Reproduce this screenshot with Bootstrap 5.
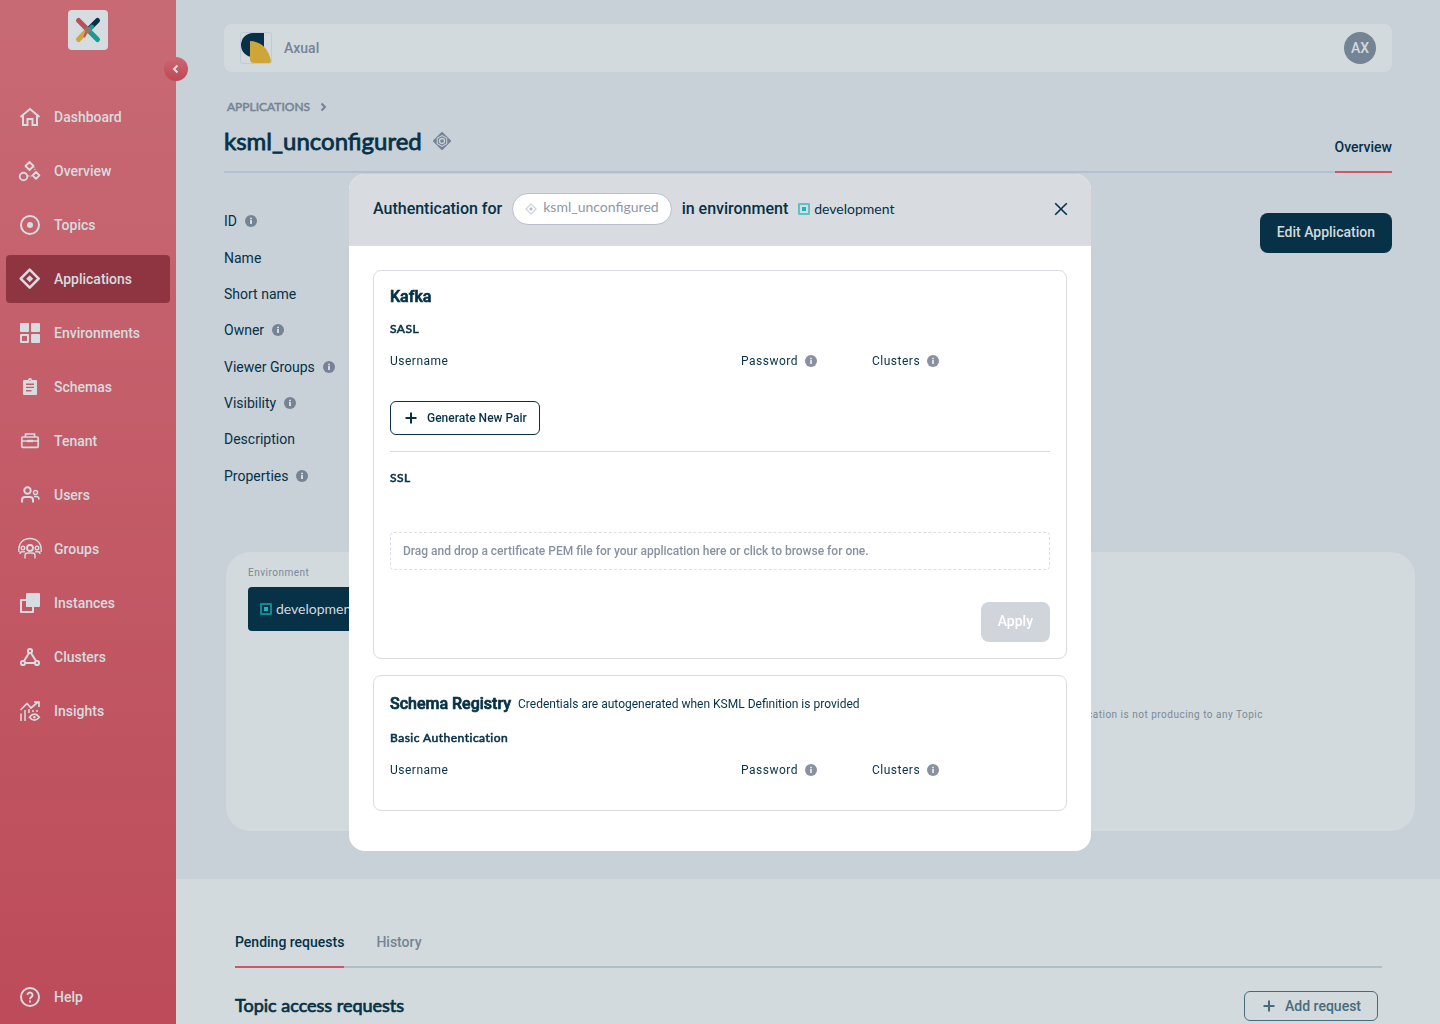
<!DOCTYPE html>
<html lang="en">
<head>
<meta charset="utf-8">
<meta name="viewport" content="width=device-width, initial-scale=1">
<title>ksml_unconfigured - Axual</title>
<link rel="stylesheet" href="https://cdn.jsdelivr.net/npm/bootstrap@5.3.0/dist/css/bootstrap.min.css">
<style>
:root{--navy:#063147;--page:#c8d0d8;--panel:#d2dadd;--muted:#758494;--accent:#cf5567;--line:#d9dbe1}
body{font-family:Roboto,"Liberation Sans",sans-serif;font-size:14px;line-height:20px;color:var(--navy);background:var(--panel);overflow:hidden}
svg{display:block;flex:none}
.lato{font-family:Lato,"Liberation Sans",sans-serif}
.sidebar{width:176px;height:100vh;background:linear-gradient(#c86a74,#bd4b59)}
.sidebar .nav-link{height:48px;padding:0 12px;gap:12px;color:#d6dcdf;font-weight:500;border-radius:4px;margin:0 6px}
.sidebar .nav-link.active{background:#8e3541}
.brand{width:40px;height:40px;margin:10px 68px 43px;border-radius:4px;background:#d5dde0}
.side-items{gap:6px}
.side-items.help{margin-bottom:3px}
.collapse-btn{width:24px;height:24px;top:57px;right:-12px;border:0;border-radius:50%;background:linear-gradient(#cc6873,#be4756);padding:0 6px}
.upper{background:var(--page);padding:24px 48px 48px}
.topbar{height:48px;border-radius:8px;background:var(--panel);padding:0 16px;color:var(--muted);font-weight:500}
.org-name{gap:12px}
.avatar{width:32px;height:32px;border:0;border-radius:50%;background:#758494;color:#d2dadd;font-weight:500;padding:0}
.crumb{gap:6px;margin:25px 3px 0;font-size:12px;-webkit-text-stroke:.5px;color:var(--muted)}
.crumb a{color:inherit;text-decoration:none}
.title-row{height:56px;border-bottom:2px solid #b3bfd2}
.title-row h1{font-size:24px;line-height:32px;font-weight:400;-webkit-text-stroke:.8px;margin:8px 0 0}
.title-row .tab{height:56px;padding-top:20px;border-bottom:2px solid var(--accent);color:var(--navy);text-decoration:none;font-weight:500}
.title-name{gap:11px}
.app-mark{margin-top:15px}
.details{height:291px;margin:30px 0 58px}
.navy-btn{height:40px;margin-top:40px;padding:0 16px 2px;border-radius:8px;background:var(--navy);color:#d2dadd;font-size:14px;font-weight:500;line-height:20px}
.env-panel{height:279px;margin:0 -23px 0 2px;padding:11px 152px 0 22px;border-radius:24px;background:var(--panel);font-size:10px;letter-spacing:.5px;color:#7c8998}
.env-btn{display:flex;align-items:center;gap:4px;width:222px;height:44px;margin-top:4px;padding:0 12px;border:0;border-radius:4px;background:var(--navy);color:#d2dadd;font-size:14px;letter-spacing:normal}
.env-note{padding-top:36px}
.lower{padding:53px 58px 0 59px}
.tabs-line{gap:32px;height:36px;border-bottom:2px solid #b0bdc4}
.tabs-line a{height:36px;text-decoration:none;font-weight:500;color:var(--muted)}
.tabs-line a.current{color:var(--navy);border-bottom:2px solid var(--accent)}
.requests{margin-top:23px;padding-right:4px}
.requests h2{font-size:18px;line-height:28px;font-weight:400;-webkit-text-stroke:.7px;margin:0;padding-bottom:2px}
.add-btn{height:30px;padding:0 16px 0 18px;gap:10px;border:1px solid #486b7c;border-radius:6px;color:#486b7c;font-size:14px;font-weight:500;line-height:20px}
.modal-dialog{max-width:742px}
.modal-content{border:0;border-radius:16px;color:var(--navy)}
.modal-header{height:72px;padding:0 23px 2px 24px;background:#d8dbe0;border:0;border-radius:16px 16px 0 0;font-size:16px;font-weight:500}
.modal-header h2{font-size:16px;line-height:20px;font-weight:500;gap:10px}
.app-pill{height:32px;padding:0 12px;gap:6px;border:1px solid #b9bfcd;border-radius:16px;background:#fff;color:#8f97a6;font-size:14px;font-weight:400}
.app-pill span{padding-bottom:4px}
.env-name{gap:4px;font-size:14px;font-weight:400}
.close-x{border:0;background:none;padding:0;color:var(--navy)}
.modal-body{padding:24px 24px 40px}
.auth-box{border:1px solid var(--line);border-radius:8px;padding:16px;font-size:12px}
.auth-box + .auth-box{margin-top:16px}
.auth-box h3{font-size:16px;line-height:20px;font-weight:500;-webkit-text-stroke:.7px;margin:0}
.auth-box h4{font-size:12px;line-height:20px;font-weight:400;-webkit-text-stroke:.6px;margin:12px 0;letter-spacing:.5px}
.box-head{height:24px;gap:7px}
.cred{width:100%;margin-bottom:14px;table-layout:fixed;letter-spacing:.5px}
.cred th{font-weight:400;padding:0}
.cred th span{gap:7px}
.cred .c-user{width:351px}
.cred .c-pass{width:131px}
.gen-btn{height:34px;margin-top:30px;padding:0 12px 0 14px;gap:10px;border:1px solid var(--navy);border-radius:6px;color:var(--navy);font-size:12px;font-weight:500;line-height:20px}
.rule{height:1px;margin:16px 0;background:var(--line)}
.drop{display:flex;align-items:center;height:38px;width:100%;margin:44px 0 32px;padding:0 12px;border:1px dashed #dcdcec;border-radius:4px;background:#fff;color:#8991a0;font-size:12px;font-weight:500}
.apply-btn,.apply-btn:disabled{height:40px;padding:0 17px 2px;border:0;border-radius:8px;background:#d0d4db;color:#fff;font-size:14px;font-weight:500;line-height:20px;opacity:1}
</style>
<script src="https://cdn.jsdelivr.net/npm/bootstrap@5.3.0/dist/js/bootstrap.bundle.min.js"></script>
</head>
<body>
<svg width="0" height="0" class="position-absolute" aria-hidden="true">
  <symbol id="info" viewBox="0 0 12 12"><circle cx="6" cy="6" r="6" fill="currentColor"/><path d="M5 2.800h2v1.400H5zM5 5h2v4H5z" fill="#fff" opacity=".7"/></symbol>
  <symbol id="plus" viewBox="0 0 12 12"><path d="M6 .5v11M.5 6h11" stroke="currentColor" stroke-width="2" fill="none"/></symbol>
  <symbol id="envsq" viewBox="0 0 12 12"><path d="M1 1h10v10H1z" fill="none" stroke="#1bb5b8" stroke-opacity=".65" stroke-width="2" stroke-linejoin="round"/><path d="M4 4h4v4H4z" fill="#1bb5b8"/></symbol>
</svg>
<div class="d-flex">
  <aside class="sidebar d-flex flex-column flex-shrink-0 position-relative">
    <a class="brand d-block" href="#" aria-label="Axual home">
      <svg width="40" height="40" viewBox="0 0 40 40" fill="none" stroke-width="5" stroke-linecap="round"><path d="M20 20 29.500 10.500" stroke="#0b2f46"/><path d="M10.500 29.500 19 20.500" stroke="#d2a345"/><path d="m20 20 9.500 9.500" stroke="#169d90"/><path d="m21 19.500 3-3" stroke="#169d90" stroke-width="4"/><path d="m10.500 10.500 8 8" stroke="#b94f59"/><path d="m16.500 26.500 3-7" stroke="#c94e5d" stroke-width="2"/><circle cx="20" cy="20" r="3" fill="#8b7774"/></svg>
    </a>
    <button class="collapse-btn position-absolute" aria-label="Collapse menu"><svg width="12" height="12" viewBox="0 0 12 12" fill="none" stroke="#d8dfe2" stroke-width="2"><path d="m7.500 2.500-3.500 3.500 3.500 3.500"/></svg></button>
    <nav class="side-items nav flex-column">
      <a class="nav-link d-flex align-items-center" href="#"><svg width="24" height="24" viewBox="0 0 24 24" fill="none" stroke="currentColor" stroke-width="2"><path d="m2.500 12 9.500-8 9.500 8M5 10.500V20h4.500v-6h5v6H19v-9.500"/></svg>Dashboard</a>
      <a class="nav-link d-flex align-items-center" href="#"><svg width="24" height="24" viewBox="0 0 24 24" fill="none" stroke="currentColor" stroke-width="1.900"><path d="m11.500 3 4 4-4 4-4-4zM18 13l3.400 3.400-3.400 3.400-3.400-3.400z" stroke-linejoin="round"/><circle cx="5.500" cy="17.500" r="3.800"/><path d="m15.500 7.500 2.500 5M10 17h4" stroke-width="1" stroke-dasharray="1.500 1"/></svg>Overview</a>
      <a class="nav-link d-flex align-items-center" href="#"><svg width="24" height="24" viewBox="0 0 24 24"><circle cx="12" cy="12" r="9" fill="none" stroke="currentColor" stroke-width="2"/><circle cx="12" cy="12" r="3" fill="currentColor"/></svg>Topics</a>
      <a class="nav-link active d-flex align-items-center" href="#" aria-current="page"><svg width="24" height="24" viewBox="0 0 24 24"><path d="m11.700 2.700 9 9-9 9-9-9z" fill="none" stroke="currentColor" stroke-width="2.600" stroke-linejoin="round"/><path d="m11.700 8.200 3.500 3.500-3.500 3.500-3.500-3.500z" fill="currentColor"/></svg>Applications</a>
      <a class="nav-link d-flex align-items-center" href="#"><svg width="24" height="24" viewBox="0 0 24 24" fill="currentColor"><rect x="2" y="2" width="9" height="9" rx="1"/><rect x="13" y="2" width="9" height="9" rx="1"/><rect x="13" y="13" width="9" height="9" rx="1"/><rect x="3" y="14" width="7" height="7" fill="none" stroke="currentColor" stroke-width="2" stroke-linejoin="round"/></svg>Environments</a>
      <a class="nav-link d-flex align-items-center" href="#"><svg width="24" height="24" viewBox="0 0 24 24"><path fill="currentColor" fill-rule="evenodd" d="M6 5h4a2 2 0 0 1 4 0h4q1 0 1 1v13q0 1-1 1H6q-1 0-1-1V6q0-1 1-1m5.500 0v1h1V5zM8 8.500v1.400h8V8.500zm0 3.200v1.400h8v-1.400zM8 15v1.400h5.500V15z"/></svg>Schemas</a>
      <a class="nav-link d-flex align-items-center" href="#"><svg width="24" height="24" viewBox="0 0 24 24" fill="none" stroke="currentColor" stroke-width="1.700"><rect x="3.800" y="8" width="16.400" height="10.300" rx="1"/><path d="M7.500 8V5h9v3M4 12h5.500m5 0H20"/><path d="M9 10.800h6v2.400H9z" fill="currentColor" stroke="none"/></svg>Tenant</a>
      <a class="nav-link d-flex align-items-center" href="#"><svg width="24" height="24" viewBox="0 0 24 24" fill="none" stroke="currentColor" stroke-width="2"><circle cx="9.500" cy="7.500" r="3.200"/><path d="M4 19.500V17q0-3 3-3h5q3 0 3 3v2.500"/><circle cx="17.500" cy="9.500" r="2" stroke-width="1.400"/><path d="M16 13.500h2.500q2.500 0 2.500 3" stroke-width="1.500"/></svg>Users</a>
      <a class="nav-link d-flex align-items-center" href="#"><svg width="24" height="24" viewBox="0 0 24 24" fill="none" stroke="currentColor" stroke-width="1.400"><path d="M1 15C-2 -3 26 -3 23 15"/><circle cx="12" cy="11" r="3" stroke-width="1.800"/><circle cx="5" cy="11" r="1.800"/><circle cx="19" cy="11" r="1.800"/><path d="M7 21.500v-3q0-2.500 2.500-2.500h5q2.500 0 2.500 2.500v3M2 17q0-2.300 2-2.300h3m10 0h3q2 0 2 2.300"/></svg>Groups</a>
      <a class="nav-link d-flex align-items-center" href="#"><svg width="24" height="24" viewBox="0 0 24 24"><path d="M9 2h12q1 0 1 1v12q0 1-1 1h-5V9q0-1-1-1H8V3q0-1 1-1" fill="currentColor"/><path d="M8 10h6v6H8z" fill="currentColor"/><path d="M3 9h12v12H3z" fill="none" stroke="currentColor" stroke-width="2" stroke-linejoin="round"/></svg>Instances</a>
      <a class="nav-link d-flex align-items-center" href="#"><svg width="24" height="24" viewBox="0 0 24 24" fill="none" stroke="currentColor" stroke-width="2"><circle cx="12" cy="6" r="2.100"/><circle cx="5" cy="18" r="2.100"/><circle cx="19" cy="18" r="2.100"/><path d="M11 8 6 16M13 8l5 8M7 18h10"/></svg>Clusters</a>
      <a class="nav-link d-flex align-items-center" href="#"><svg width="24" height="24" viewBox="0 0 24 24" fill="none" stroke="currentColor" stroke-width="1.700"><path d="m2.500 11 6.500-6.500 4 4.500 7-6M16 3h5v5"/><path d="M3 14.500V22M7 11v11M11 10v4M15 11v2m4-2v2" stroke-width="1.500"/><path d="M11.500 18.200q4.800-6 9.800 0-5 6-9.800 0z"/><circle cx="16.400" cy="18.200" r="1.200" fill="currentColor" stroke="none"/></svg>Insights</a>
    </nav>
    <nav class="side-items help nav flex-column mt-auto">
      <a class="nav-link d-flex align-items-center" href="#"><svg width="24" height="24" viewBox="0 0 24 24" fill="none" stroke="currentColor" stroke-width="2"><circle cx="12" cy="12" r="9"/><path d="M9.500 10a2.500 2.500 0 1 1 3.800 2.100Q12 13 12 14.200M12 15.500v2"/></svg>Help</a>
    </nav>
  </aside>

  <main class="flex-grow-1 vh-100 overflow-hidden">
    <section class="upper">
      <header class="topbar d-flex align-items-center justify-content-between">
        <div class="org-name d-flex align-items-center"><svg width="32" height="32" viewBox="0 0 32 32"><rect x=".5" y=".5" width="31" height="31" rx="2" fill="#d2dadd" stroke="#c0cbd7"/><path d="M13 1h11v24H13A12 12 0 0 1 13 1" fill="#063147"/><path d="M10 25h14v6H10z" fill="#d2dadd"/><path d="M10 9q17 1 21 20 0 2-2 2H14q-4 0-4-4z" fill="#cea638"/></svg><span>Axual</span></div>
        <button class="avatar">AX</button>
      </header>
      <nav class="crumb lato d-flex align-items-center" aria-label="Breadcrumb"><a href="#">APPLICATIONS</a><svg width="14" height="12" viewBox="0 0 14 12" fill="none" stroke="currentColor" stroke-width="2"><path d="m5.500 2.500 3.500 3.500-3.500 3.500"/></svg></nav>
      <div class="title-row d-flex justify-content-between">
        <div class="title-name d-flex align-items-start">
          <h1 class="lato">ksml_unconfigured</h1>
          <svg class="app-mark" width="18" height="18" viewBox="0 0 18 18" fill="none" stroke="#758494"><path d="M9 1 17 9l-8 8-8-8z" stroke-width="2" stroke-linejoin="round" fill="#758494"/><path d="m9 3.600 4.700 2.700v5.400L9 14.400l-4.700-2.700V6.300z" stroke="#c8d0d8" stroke-width="1.100"/><circle cx="9" cy="9" r="2.500" stroke="#c8d0d8" stroke-width="1.300"/></svg>
        </div>
        <a class="tab" href="#">Overview</a>
      </div>
      <div class="d-flex justify-content-between align-items-start">
        <div class="details d-flex flex-column">
          <div class="d-flex align-items-center flex-fill gap-2">ID <svg width="12" height="12" color="#758494"><use href="#info"/></svg></div>
          <div class="d-flex align-items-center flex-fill">Name</div>
          <div class="d-flex align-items-center flex-fill">Short name</div>
          <div class="d-flex align-items-center flex-fill gap-2">Owner <svg width="12" height="12" color="#758494"><use href="#info"/></svg></div>
          <div class="d-flex align-items-center flex-fill gap-2">Viewer Groups <svg width="12" height="12" color="#758494"><use href="#info"/></svg></div>
          <div class="d-flex align-items-center flex-fill gap-2">Visibility <svg width="12" height="12" color="#758494"><use href="#info"/></svg></div>
          <div class="d-flex align-items-center flex-fill">Description</div>
          <div class="d-flex align-items-center flex-fill gap-2">Properties <svg width="12" height="12" color="#758494"><use href="#info"/></svg></div>
        </div>
        <button class="btn navy-btn">Edit Application</button>
      </div>
      <div class="env-panel d-flex justify-content-between">
        <div>
          <span id="env-label">Environment</span>
          <button class="env-btn lato" aria-describedby="env-label"><svg width="12" height="12"><use href="#envsq"/></svg>development</button>
        </div>
        <div class="env-note d-flex align-items-center">This application is not producing to any Topic</div>
      </div>
    </section>
    <section class="lower">
      <nav class="tabs-line d-flex"><a class="current" href="#">Pending requests</a><a href="#">History</a></nav>
      <div class="requests d-flex justify-content-between align-items-center">
        <h2 class="lato">Topic access requests</h2>
        <button class="btn add-btn d-flex align-items-center"><svg width="12" height="12"><use href="#plus"/></svg>Add request</button>
      </div>
    </section>
  </main>
</div>

<div class="modal d-block" role="dialog" aria-modal="true" aria-labelledby="auth-title">
  <div class="modal-dialog modal-dialog-centered my-0 min-vh-100">
    <div class="modal-content">
      <div class="modal-header">
        <h2 id="auth-title" class="d-flex align-items-center mb-0">Authentication for
          <span class="app-pill lato d-flex align-items-center"><svg width="12" height="12" viewBox="0 0 12 12"><path d="m6 1 5 5-5 5-5-5z" fill="none" stroke="#d0d4dc" stroke-width="1.300"/><path d="m6 4 2 2-2 2-2-2z" fill="#b9bfc9"/></svg><span>ksml_unconfigured</span></span>
          in environment
          <span class="env-name lato d-flex align-items-center"><svg width="12" height="12"><use href="#envsq"/></svg>development</span>
        </h2>
        <button class="close-x" aria-label="Close"><svg width="14" height="14" viewBox="0 0 14 14" fill="none" stroke="currentColor" stroke-width="1.600"><path d="m1.200 1.200 11.600 11.600M12.800 1.200 1.200 12.800"/></svg></button>
      </div>
      <div class="modal-body">
        <section class="auth-box">
          <h3>Kafka</h3>
          <h4 class="lato">SASL</h4>
          <table class="cred"><thead><tr>
            <th class="c-user" scope="col">Username</th>
            <th class="c-pass" scope="col"><span class="d-flex align-items-center">Password<svg width="12" height="12" color="#8991a0"><use href="#info"/></svg></span></th>
            <th scope="col"><span class="d-flex align-items-center">Clusters<svg width="12" height="12" color="#8991a0"><use href="#info"/></svg></span></th>
          </tr></thead></table>
          <button class="btn gen-btn d-flex align-items-center"><svg width="12" height="12"><use href="#plus"/></svg>Generate New Pair</button>
          <div class="rule"></div>
          <h4 class="lato">SSL</h4>
          <button class="drop">Drag and drop a certificate PEM file for your application here or click to browse for one.</button>
          <div class="d-flex justify-content-end"><button class="btn apply-btn" disabled>Apply</button></div>
        </section>
        <section class="auth-box">
          <div class="box-head d-flex align-items-center"><h3>Schema Registry</h3><span>Credentials are autogenerated when KSML Definition is provided</span></div>
          <h4 class="lato">Basic Authentication</h4>
          <table class="cred"><thead><tr>
            <th class="c-user" scope="col">Username</th>
            <th class="c-pass" scope="col"><span class="d-flex align-items-center">Password<svg width="12" height="12" color="#8991a0"><use href="#info"/></svg></span></th>
            <th scope="col"><span class="d-flex align-items-center">Clusters<svg width="12" height="12" color="#8991a0"><use href="#info"/></svg></span></th>
          </tr></thead></table>
        </section>
      </div>
    </div>
  </div>
</div>
</body>
</html>
